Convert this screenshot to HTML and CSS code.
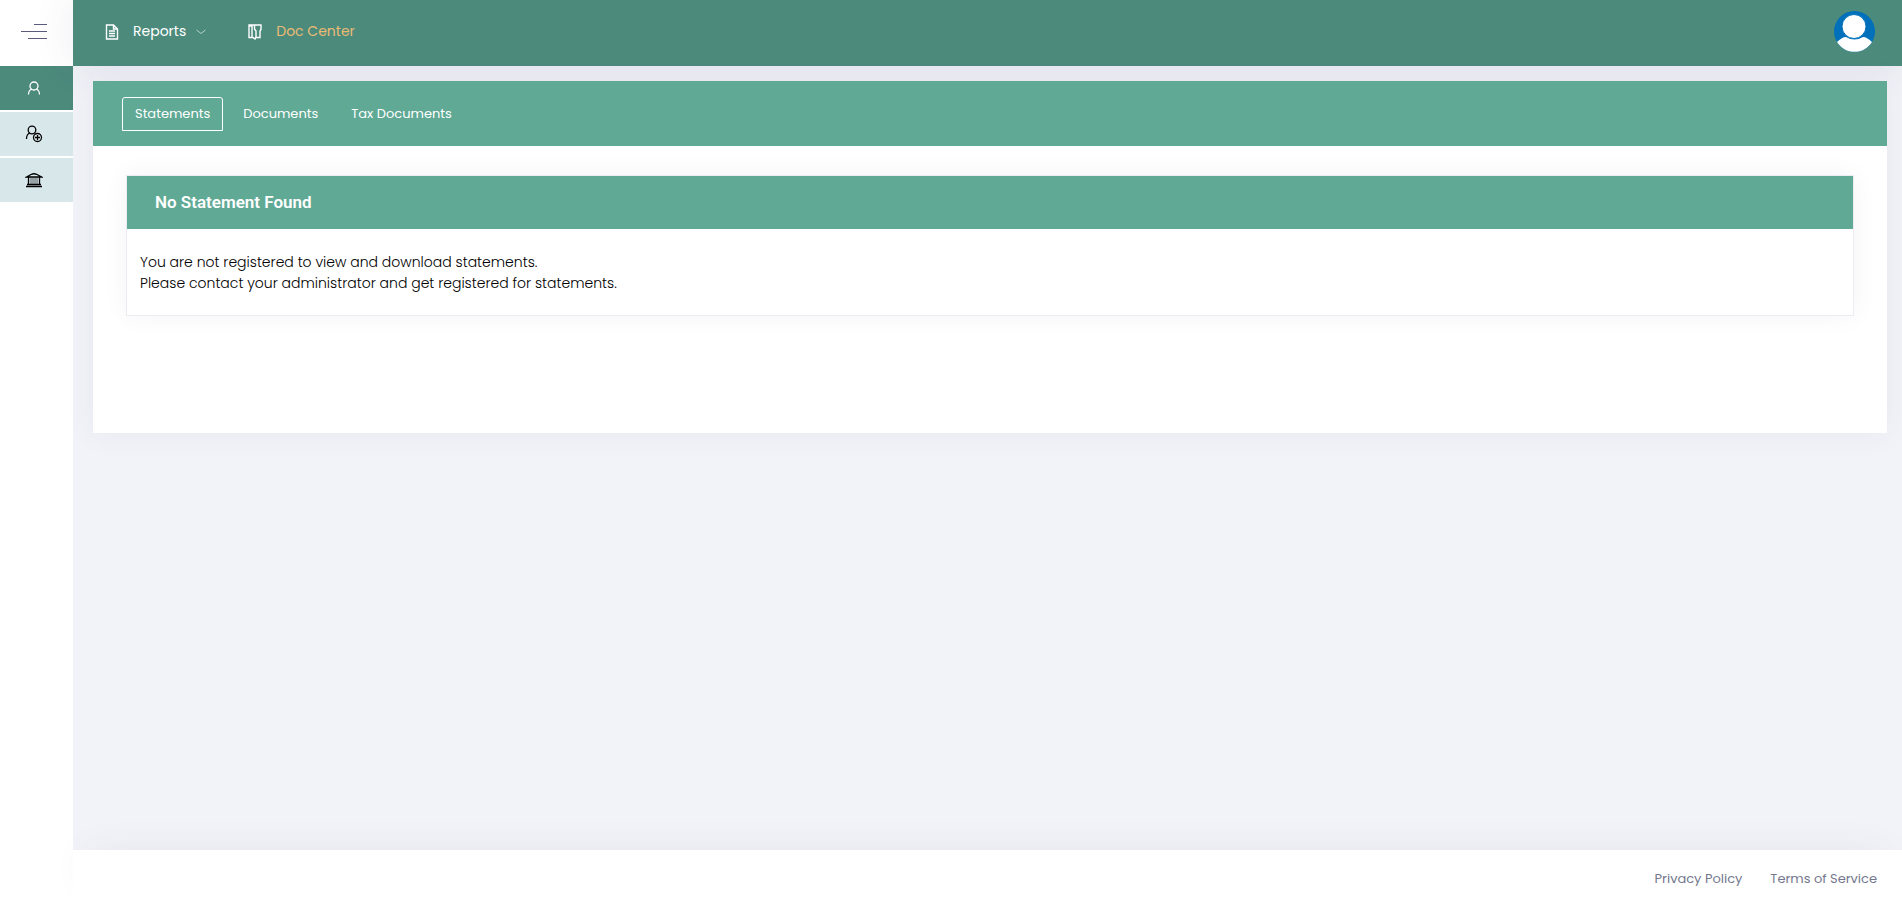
FILE: index.html
```html
<!DOCTYPE html>
<html lang="en">
<head>
    <meta charset="UTF-8">
    <meta name="viewport" content="width=device-width, initial-scale=1.0">
    <title>Doc Center</title>
    <link rel="stylesheet" href="styles.css">
</head>
<body>
    <aside class="sidebar">
        <button class="menu-toggle" type="button" aria-label="Toggle menu">
            <span></span>
            <span></span>
            <span></span>
        </button>
        <nav class="side-nav">
            <a href="#" class="side-link active" aria-label="Profile">
                <svg width="16" height="16" viewBox="0 0 16 16"><circle cx="8" cy="6" r="4"/><path d="M2.5 14.5C2.5 11.5 4 9.6 6 9M13.5 14.5C13.5 11.5 12 9.6 10 9"/></svg>
            </a>
            <a href="#" class="side-link" aria-label="Add user">
                <svg width="18" height="18" viewBox="0 0 18 18"><circle cx="7" cy="5" r="3.8"/><path d="M1.5 14C1.5 10.5 3 8.6 5 8"/><circle cx="12.5" cy="12.5" r="4"/><path d="M12.5 10v5M10 12.5h5"/></svg>
            </a>
            <a href="#" class="side-link" aria-label="Bank">
                <svg width="18" height="16" viewBox="0 0 18 16"><path d="M1.5 5L6 2.5Q9 1 12 2.5L16.5 5Z"/><path d="M1 14.5h16M2 12.500h14M3.500 5v7.500M14.500 5v7.500"/><path class="thin" d="M6 5.500v7M8 5.500v7M10 5.500v7M12 5.500v7"/></svg>
            </a>
        </nav>
    </aside>

    <div class="wrapper">
        <header class="topbar">
            <nav class="top-nav">
                <a href="#" class="top-link">
                    <svg width="14" height="16" viewBox="0 0 14 16"><path d="M1.5 1h7L12.5 5v10h-11ZM8.5 1v4h4M4 7h6M4 9.5h6M4 12h6"/></svg>
                    <span>Reports</span>
                    <svg class="chevron" width="10" height="6" viewBox="0 0 10 6"><path d="M.5 1L5 4.5L9.5 1"/></svg>
                </a>
                <a href="#" class="top-link current">
                    <svg width="14" height="16" viewBox="0 0 14 16"><path d="M1 1h5.500v4l1.500 2v6l-1 2-2-1.500H1ZM1 1l3 1.500v11M6.500 1H13v4.500l-1 1.500v6.500H8"/></svg>
                    <span>Doc Center</span>
                </a>
            </nav>
            <button class="avatar" type="button" aria-label="Account">
                <svg width="41" height="41" viewBox="0 0 41 41">
                    <circle cx="20.5" cy="20.5" r="20.5" fill="#0070ba"/>
                    <path d="M3 31C6 28 9 26 12 26Q20.5 31 29 26C32 26 35 28 38 31A20.5 20.5 0 0 1 3 31Z" fill="#fff"/>
                    <circle cx="20" cy="15.5" r="12" fill="#fff" stroke="#0070ba" stroke-width="1"/>
                </svg>
            </button>
        </header>

        <main class="content">
            <section class="card">
                <nav class="tabs">
                    <a href="#" class="tab active">Statements</a>
                    <a href="#" class="tab">Documents</a>
                    <a href="#" class="tab">Tax Documents</a>
                </nav>
                <div class="card-body">
                    <div class="panel">
                        <h2>No Statement Found</h2>
                        <p>You are not registered to view and download statements.<br>
                        Please contact your administrator and get registered for statements.</p>
                    </div>
                </div>
            </section>
        </main>

        <footer class="footer">
            <a href="#">Privacy Policy</a>
            <a href="#">Terms of Service</a>
        </footer>
    </div>
</body>
</html>
```
FILE: styles.css
```css
* {
    margin: 0;
    padding: 0;
    box-sizing: border-box;
}

body {
    display: flex;
    min-height: 100vh;
    background: #f1f3f8;
    color: #000;
    font-family: Poppins, Inter, sans-serif;
    font-size: 14px;
    line-height: 21px;
}

a {
    color: inherit;
    text-decoration: none;
}

button {
    border: 0;
    background: none;
    cursor: pointer;
}

svg {
    display: block;
    flex: none;
    fill: none;
    stroke: currentColor;
}

.avatar svg {
    stroke: none;
}

/* Sidebar */
.sidebar {
    flex: 0 0 73px;
    background: #fff;
}

.menu-toggle {
    display: flex;
    flex-direction: column;
    align-items: flex-end;
    justify-content: center;
    gap: 6px;
    width: 100%;
    height: 66px;
    padding: 0 26px 3px 0;
}

.menu-toggle span {
    width: 26px;
    height: 1px;
    background: #5d5b7c;
}

.menu-toggle span:first-child {
    width: 13px;
}

.menu-toggle span:last-child {
    width: 19px;
}

.side-nav {
    display: flex;
    flex-direction: column;
    gap: 2px;
}

.side-link {
    display: flex;
    align-items: center;
    justify-content: center;
    height: 44px;
    padding-right: 5px;
    background: #d8e7ea;
    color: #000;
}

.side-link svg {
    stroke-width: 1.3;
}

.side-link .thin {
    stroke-width: 1;
    opacity: 0.6;
}

.side-link.active {
    background: #4c8a7c;
    color: #fff;
}

/* Top bar */
.wrapper {
    display: flex;
    flex: 1;
    flex-direction: column;
    min-width: 0;
}

.topbar {
    display: flex;
    align-items: center;
    justify-content: space-between;
    height: 66px;
    padding: 0 27px 3px 32px;
    background: #4c8a7c;
    box-shadow: 0 0 40px rgba(82, 63, 105, 0.1);
}

.top-nav {
    display: flex;
    gap: 42px;
}

.top-link {
    display: flex;
    align-items: center;
    gap: 14px;
    color: #fff;
}

.top-link svg {
    stroke-width: 1.4;
}

.top-link.current {
    color: #ebbb74;
}

.top-link.current svg {
    color: #fff;
}

.top-link .chevron {
    margin-left: -4px;
    opacity: 0.6;
    stroke-width: 1;
}

/* Content */
.content {
    flex: 1;
    padding: 15px 15px 40px 20px;
}

.card {
    min-height: 352px;
    background: #fff;
    box-shadow: 0 0 30px rgba(82, 63, 105, 0.06);
}

.tabs {
    display: flex;
    align-items: center;
    gap: 7px;
    height: 65px;
    padding: 0 29px;
    background: #5fa995;
    color: #fff;
    font-size: 13px;
    line-height: 20px;
}

.tab {
    padding: 6px 12px;
    border: 1px solid transparent;
    border-radius: 3px 3px 0 0;
}

.tab.active {
    border-color: #fff;
}

.card-body {
    padding: 29px 33px;
}

.panel {
    border: 1px solid #ebedf2;
    box-shadow: 0 0 24px rgba(0, 0, 0, 0.05);
}

.panel h2 {
    padding: 0 28px;
    background: #5fa995;
    color: #fff;
    font-family: Roboto, sans-serif;
    font-size: 17px;
    font-weight: 600;
    line-height: 53px;
}

.panel p {
    padding: 23px 13px 21px;
    font-weight: 300;
}

/* Footer */
.footer {
    display: flex;
    align-items: center;
    justify-content: flex-end;
    gap: 28px;
    height: 53px;
    padding: 4px 25px 0;
    background: #fff;
    box-shadow: 0 -8px 40px -16px rgba(82, 63, 105, 0.12);
    color: #74788d;
    font-size: 13px;
}
```
